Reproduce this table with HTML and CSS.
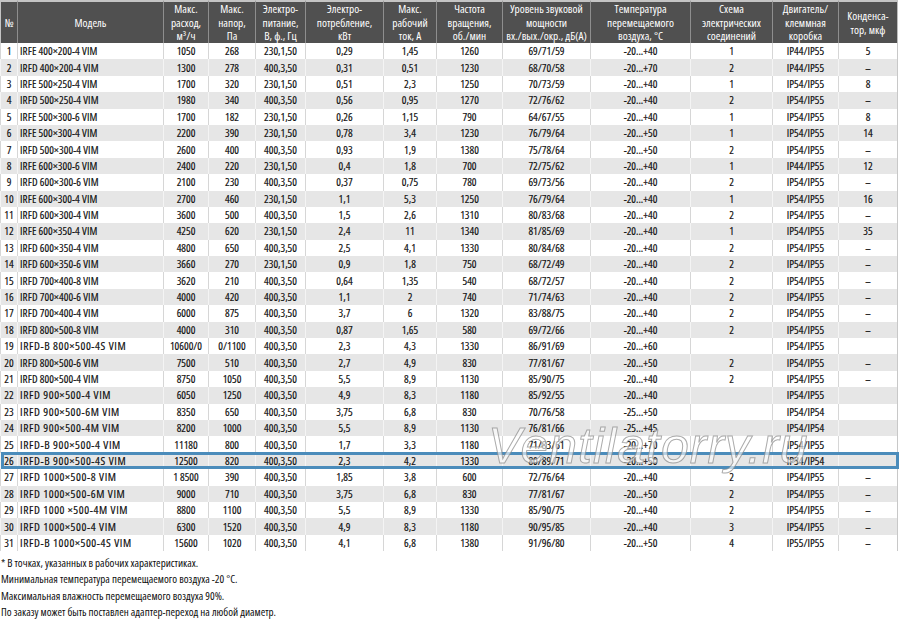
FILE: index.html
```html
<!DOCTYPE html>
<html lang="ru">
<head>
<meta charset="utf-8">
<title>IRFE / IRFD</title>
<link rel="stylesheet" href="styles.css">
</head>
<body>
<div class="sheet">
  <table class="spec">
    <colgroup>
      <col class="c-no"><col class="c-model"><col class="c-flow"><col class="c-press"><col class="c-power"><col class="c-cons"><col class="c-cur"><col class="c-rpm"><col class="c-noise"><col class="c-temp"><col class="c-scheme"><col class="c-ip"><col class="c-cap">
    </colgroup>
    <thead>
      <tr>
        <th>№</th>
        <th>Модель</th>
        <th>Макс.<br>расход,<br>м³/ч</th>
        <th>Макс.<br>напор,<br>Па</th>
        <th>Электро-<br>питание,<br>В, ф., Гц</th>
        <th>Электро-<br>потребление,<br>кВт</th>
        <th>Макс.<br>рабочий<br>ток, А</th>
        <th>Частота<br>вращения,<br>об./мин</th>
        <th>Уровень звуковой<br>мощности<br>вх./вых./окр., дБ(А)</th>
        <th>Температура<br>перемещаемого<br>воздуха, °С</th>
        <th>Схема<br>электрических<br>соединений</th>
        <th>Двигатель/<br>клеммная<br>коробка</th>
        <th>Конденса-<br>тор, мкф</th>
      </tr>
    </thead>
    <tbody>
      <tr><td>1</td><td class="model">IRFE 400×200-4 VIM</td><td>1050</td><td>268</td><td>230,1,50</td><td>0,29</td><td>1,45</td><td>1260</td><td>69/71/59</td><td>-20...+40</td><td>1</td><td>IP44/IP55</td><td>5</td></tr>
      <tr><td>2</td><td class="model">IRFD 400×200-4 VIM</td><td>1300</td><td>278</td><td>400,3,50</td><td>0,31</td><td>0,51</td><td>1230</td><td>68/70/58</td><td>-20...+70</td><td>2</td><td>IP44/IP55</td><td>–</td></tr>
      <tr><td>3</td><td class="model">IRFE 500×250-4 VIM</td><td>1700</td><td>320</td><td>230,1,50</td><td>0,51</td><td>2,3</td><td>1250</td><td>70/73/59</td><td>-20...+40</td><td>1</td><td>IP54/IP55</td><td>8</td></tr>
      <tr><td>4</td><td class="model">IRFD 500×250-4 VIM</td><td>1980</td><td>340</td><td>400,3,50</td><td>0,56</td><td>0,95</td><td>1270</td><td>72/76/62</td><td>-20...+40</td><td>2</td><td>IP54/IP55</td><td>–</td></tr>
      <tr><td>5</td><td class="model">IRFE 500×300-6 VIM</td><td>1700</td><td>182</td><td>230,1,50</td><td>0,26</td><td>1,15</td><td>790</td><td>64/67/55</td><td>-20...+40</td><td>1</td><td>IP54/IP55</td><td>8</td></tr>
      <tr><td>6</td><td class="model">IRFE 500×300-4 VIM</td><td>2200</td><td>390</td><td>230,1,50</td><td>0,78</td><td>3,4</td><td>1230</td><td>76/79/64</td><td>-20...+50</td><td>1</td><td>IP54/IP55</td><td>14</td></tr>
      <tr><td>7</td><td class="model">IRFD 500×300-4 VIM</td><td>2600</td><td>400</td><td>400,3,50</td><td>0,93</td><td>1,9</td><td>1380</td><td>75/78/64</td><td>-20...+50</td><td>2</td><td>IP54/IP55</td><td>–</td></tr>
      <tr><td>8</td><td class="model">IRFE 600×300-6 VIM</td><td>2400</td><td>220</td><td>230,1,50</td><td>0,4</td><td>1,8</td><td>700</td><td>72/75/62</td><td>-20...+40</td><td>1</td><td>IP44/IP55</td><td>12</td></tr>
      <tr><td>9</td><td class="model">IRFD 600×300-6 VIM</td><td>2100</td><td>230</td><td>400,3,50</td><td>0,37</td><td>0,75</td><td>780</td><td>69/73/56</td><td>-20...+40</td><td>2</td><td>IP54/IP55</td><td>–</td></tr>
      <tr><td>10</td><td class="model">IRFE 600×300-4 VIM</td><td>2700</td><td>460</td><td>230,1,50</td><td>1,1</td><td>5,3</td><td>1250</td><td>76/79/64</td><td>-20...+40</td><td>1</td><td>IP54/IP55</td><td>16</td></tr>
      <tr><td>11</td><td class="model">IRFD 600×300-4 VIM</td><td>3600</td><td>500</td><td>400,3,50</td><td>1,5</td><td>2,6</td><td>1310</td><td>80/83/68</td><td>-20...+40</td><td>2</td><td>IP54/IP55</td><td>–</td></tr>
      <tr><td>12</td><td class="model">IRFE 600×350-4 VIM</td><td>4250</td><td>620</td><td>230,1,50</td><td>2,4</td><td>11</td><td>1340</td><td>81/85/69</td><td>-20...+40</td><td>1</td><td>IP54/IP55</td><td>35</td></tr>
      <tr><td>13</td><td class="model">IRFD 600×350-4 VIM</td><td>4800</td><td>650</td><td>400,3,50</td><td>2,5</td><td>4,1</td><td>1330</td><td>80/84/68</td><td>-20...+40</td><td>2</td><td>IP54/IP55</td><td>–</td></tr>
      <tr><td>14</td><td class="model">IRFD 600×350-6 VIM</td><td>3660</td><td>270</td><td>230,1,50</td><td>0,9</td><td>1,8</td><td>750</td><td>68/72/49</td><td>-20...+40</td><td>2</td><td>IP54/IP55</td><td>–</td></tr>
      <tr><td>15</td><td class="model">IRFD 700×400-8 VIM</td><td>3620</td><td>210</td><td>400,3,50</td><td>0,64</td><td>1,35</td><td>540</td><td>68/72/57</td><td>-20...+40</td><td>2</td><td>IP54/IP55</td><td>–</td></tr>
      <tr><td>16</td><td class="model">IRFD 700×400-6 VIM</td><td>4000</td><td>420</td><td>400,3,50</td><td>1,1</td><td>2</td><td>740</td><td>71/74/63</td><td>-20...+40</td><td>2</td><td>IP54/IP55</td><td>–</td></tr>
      <tr><td>17</td><td class="model">IRFD 700×400-4 VIM</td><td>6000</td><td>875</td><td>400,3,50</td><td>3,7</td><td>6</td><td>1320</td><td>83/88/75</td><td>-20...+40</td><td>2</td><td>IP54/IP55</td><td>–</td></tr>
      <tr><td>18</td><td class="model">IRFD 800×500-8 VIM</td><td>4000</td><td>310</td><td>400,3,50</td><td>0,87</td><td>1,65</td><td>580</td><td>69/72/66</td><td>-20...+40</td><td>2</td><td>IP54/IP55</td><td>–</td></tr>
      <tr class="wide"><td>19</td><td class="model">IRFD-B 800×500-4S VIM</td><td>10600/0</td><td>0/1100</td><td>400,3,50</td><td>2,3</td><td>4,3</td><td>1330</td><td>86/91/69</td><td>-20...+60</td><td></td><td>IP54/IP55</td><td></td></tr>
      <tr><td>20</td><td class="model">IRFD 800×500-6 VIM</td><td>7500</td><td>510</td><td>400,3,50</td><td>2,7</td><td>4,9</td><td>830</td><td>77/81/67</td><td>-20...+50</td><td>2</td><td>IP54/IP55</td><td>–</td></tr>
      <tr><td>21</td><td class="model">IRFD 800×500-4 VIM</td><td>8750</td><td>1050</td><td>400,3,50</td><td>5,5</td><td>8,9</td><td>1130</td><td>85/90/75</td><td>-20...+40</td><td>2</td><td>IP54/IP55</td><td>–</td></tr>
      <tr class="wide"><td>22</td><td class="model">IRFD 900×500-4 VIM</td><td>6050</td><td>1250</td><td>400,3,50</td><td>4,9</td><td>8,3</td><td>1180</td><td>85/92/55</td><td>-20…+40</td><td></td><td>IP54/IP55</td><td></td></tr>
      <tr class="wide"><td>23</td><td class="model">IRFD 900×500-6M VIM</td><td>8350</td><td>650</td><td>400,3,50</td><td>3,75</td><td>6,8</td><td>830</td><td>70/76/58</td><td>-25…+50</td><td></td><td>IP54/IP54</td><td></td></tr>
      <tr class="wide"><td>24</td><td class="model">IRFD 900×500-4M VIM</td><td>8200</td><td>1000</td><td>400,3,50</td><td>5,5</td><td>8,9</td><td>1130</td><td>76/81/66</td><td>-25…+45</td><td></td><td>IP54/IP54</td><td></td></tr>
      <tr class="wide"><td>25</td><td class="model">IRFD-B 900×500-4 VIM</td><td>11180</td><td>800</td><td>400,3,50</td><td>1,7</td><td>3,3</td><td>1180</td><td>71/83/61</td><td>-20...+70</td><td></td><td>IP54/IP55</td><td></td></tr>
      <tr class="wide is-selected"><td class="mark">26</td><td class="model">IRFD-B 900×500-4S VIM</td><td>12500</td><td>820</td><td>400,3,50</td><td>2,3</td><td>4,2</td><td>1330</td><td>80/89/71</td><td>-20...+50</td><td></td><td>IP54/IP54</td><td></td></tr>
      <tr class="wide"><td>27</td><td class="model">IRFD 1000×500-8 VIM</td><td>1 8500</td><td>390</td><td>400,3,50</td><td>1,85</td><td>3,8</td><td>600</td><td>72/76/64</td><td>-20...+40</td><td>2</td><td>IP54/IP55</td><td>–</td></tr>
      <tr class="wide"><td>28</td><td class="model">IRFD 1000×500-6M VIM</td><td>9000</td><td>710</td><td>400,3,50</td><td>3,75</td><td>6,8</td><td>830</td><td>77/81/67</td><td>-20...+50</td><td>2</td><td>IP54/IP55</td><td>–</td></tr>
      <tr class="wide"><td>29</td><td class="model">IRFD 1000 ×500-4M VIM</td><td>8800</td><td>1100</td><td>400,3,50</td><td>5,5</td><td>8,9</td><td>1330</td><td>85/90/75</td><td>-20...+40</td><td>2</td><td>IP54/IP55</td><td>–</td></tr>
      <tr class="wide"><td>30</td><td class="model">IRFD 1000×500-4 VIM</td><td>6300</td><td>1520</td><td>400,3,50</td><td>4,9</td><td>8,3</td><td>1180</td><td>90/95/85</td><td>-20...+40</td><td>3</td><td>IP54/IP55</td><td>–</td></tr>
      <tr class="wide"><td>31</td><td class="model">IRFD-B 1000×500-4S VIM</td><td>15600</td><td>1020</td><td>400,3,50</td><td>4,1</td><td>6,8</td><td>1380</td><td>91/96/80</td><td>-20...+50</td><td>4</td><td>IP55/IP55</td><td>–</td></tr>
    </tbody>
  </table>
  <div class="watermark">Ventilatorry.ru</div>
  <div class="notes">
    <p>* В точках, указанных в рабочих характеристиках.</p>
    <p>Минимальная температура перемещаемого воздуха -20 °C.</p>
    <p>Максимальная влажность перемещаемого воздуха 90%.</p>
    <p>По заказу может быть поставлен адаптер-переход на любой диаметр.</p>
  </div>
</div>
</body>
</html>
```

FILE: styles.css
```css
html, body {
  margin: 0;
  padding: 0;
  background: #ffffff;
}

body {
  font-family: "Open Sans", "Liberation Sans Narrow", "DejaVu Sans Condensed", sans-serif;
  font-stretch: 75%;
  font-size: 11px;
  color: #0e0e0e;
}

.sheet {
  position: relative;
  width: 900px;
  height: 619px;
  overflow: hidden;
}

.spec {
  width: 898px;
  table-layout: fixed;
  border-collapse: separate;
  border-spacing: 0;
}

.c-no { width: 18px; }
.c-model { width: 146px; }
.c-flow { width: 45px; }
.c-press { width: 47px; }
.c-power { width: 50px; }
.c-cons { width: 78px; }
.c-cur { width: 53px; }
.c-rpm { width: 66px; }
.c-noise { width: 88px; }
.c-temp { width: 100px; }
.c-scheme { width: 82px; }
.c-ip { width: 66px; }
.c-cap { width: 59px; }

.spec th,
.spec td {
  box-sizing: border-box;
  padding: 0 1px;
  text-align: center;
  white-space: nowrap;
  overflow: hidden;
}

.spec th {
  height: 43px;
  background: #505050;
  color: #ffffff;
  font-weight: normal;
  font-size: 11.3px;
  line-height: 13.5px;
  vertical-align: middle;
  border-top: 2px solid #c4c4c4;
  border-right: 1px solid #8e8e8e;
}

.spec th:first-child {
  border-left: 1px solid #c4c4c4;
}

.spec th:last-child {
  border-right: 1px solid #bdbdbd;
}

.spec td {
  height: 16.4px;
  line-height: 14px;
  font-weight: 500;
  vertical-align: middle;
  border-right: 1px solid #d6d6d6;
  -webkit-text-stroke: 0.15px #0e0e0e;
}

.spec td:first-child {
  border-left: 1px solid #d6d6d6;
}

.spec td:last-child {
  border-right: 1px solid #c8c8c8;
}

.spec tbody tr:nth-child(even) td {
  background: #e6e6e6;
  border-right-color: #f4f4f4;
}

.spec tbody tr:nth-child(even) td:first-child {
  border-left-color: #f4f4f4;
}

.spec tbody tr:nth-child(even) td:last-child {
  border-right-color: #c8c8c8;
}

.spec td.model {
  text-align: left;
  padding-left: 2px;
  letter-spacing: 0.1px;
}

.spec tr.wide td.model {
  font-size: 11.5px;
  letter-spacing: 0.6px;
}

.spec tr.is-selected td.mark {
  position: relative;
  overflow: visible;
}

.is-selected .mark::after {
  content: "";
  position: absolute;
  left: 0;
  top: -1px;
  width: 898px;
  height: calc(100% + 1px);
  box-sizing: border-box;
  border: 3px solid #4b8cbb;
  z-index: 1;
}

.watermark {
  position: absolute;
  left: 488px;
  top: 416px;
  z-index: 2;
  font-family: "Liberation Sans", "DejaVu Sans", sans-serif;
  font-stretch: normal;
  font-style: italic;
  font-size: 50px;
  line-height: 60px;
  letter-spacing: 1px;
  color: rgba(255, 255, 255, 0.6);
  -webkit-text-stroke: 1px rgba(135, 135, 135, 0.7);
  pointer-events: none;
  white-space: nowrap;
}

.notes {
  padding: 4px 0 0 1px;
}

.notes p {
  margin: 0;
  line-height: 16.3px;
}
```
